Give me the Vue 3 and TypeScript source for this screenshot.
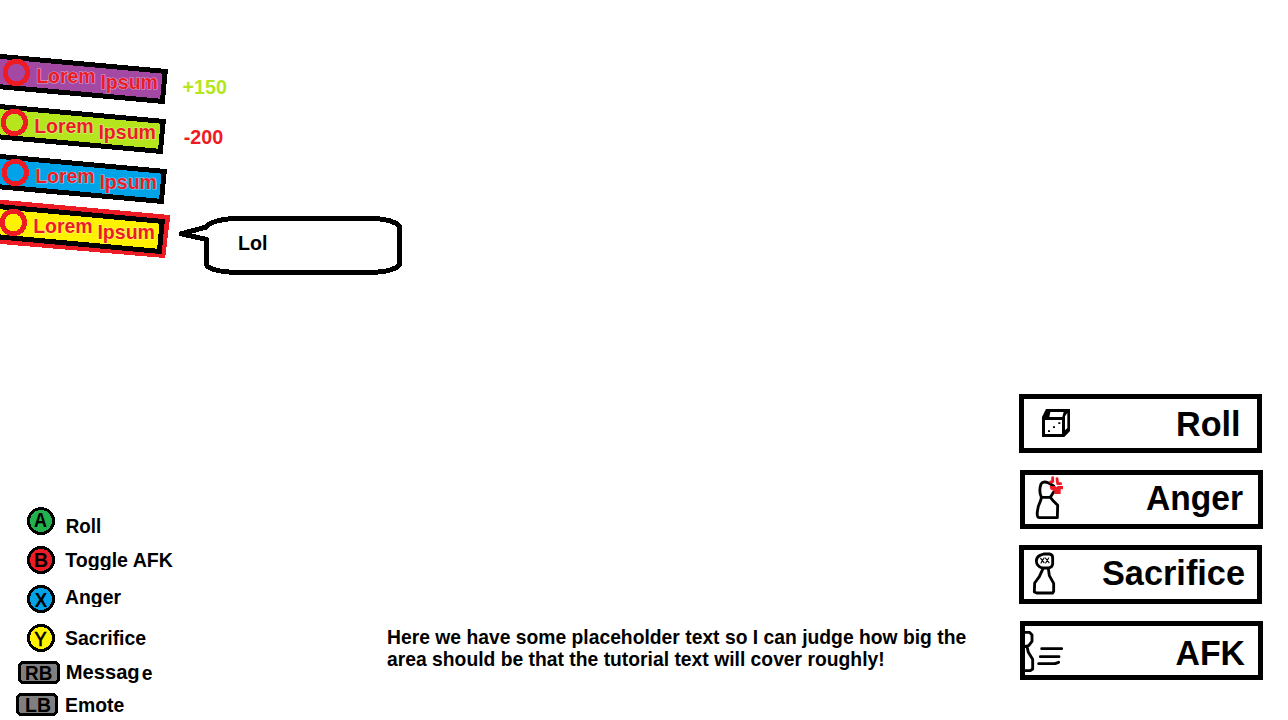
<script setup lang="ts">
interface Player {
  color: string
  shift: number
  delta?: string
  deltaX?: number
  deltaWidth?: number
  deltaColor?: string
  active?: boolean
}

interface Control {
  key: string
  color: string
  label: string
  top: number
  keyX: number
  keyY: number
  keyWidth: number
  labelX: number
  labelY: number
  labelWidth: number
  clip: number
  wide?: boolean
  padX: number
}

interface Action {
  name: string
  x: number
  y: number
  width: number
  offset: boolean
}

const players: Player[] = [
  { color: '#a349a4', shift: 0, delta: '+150', deltaX: 2.5, deltaWidth: 44.5, deltaColor: '#b5e61d' },
  { color: '#b5e61d', shift: -2, delta: '-200', deltaX: 3.7, deltaWidth: 39.5, deltaColor: '#ed1c24' },
  { color: '#00a2e8', shift: -1 },
  { color: '#fff200', shift: -3, active: true },
]

const controls: Control[] = [
  { key: 'A', color: '#22b14c', label: 'Roll', top: 507, keyX: 34, keyY: 20, keyWidth: 13, labelX: 65.7, labelY: 26, labelWidth: 35.5, clip: 39, padX: 27 },
  { key: 'B', color: '#ed1c24', label: 'Toggle AFK', top: 546, keyX: 34, keyY: 21, keyWidth: 14, labelX: 65.2, labelY: 21, labelWidth: 107.8, clip: 24, padX: 27 },
  { key: 'X', color: '#00a2e8', label: 'Anger', top: 585, keyX: 34.7, keyY: 21.5, keyWidth: 12.5, labelX: 65, labelY: 19, labelWidth: 56, clip: 22, padX: 27 },
  { key: 'Y', color: '#fff200', label: 'Sacrifice', top: 624, keyX: 34.5, keyY: 22, keyWidth: 12, labelX: 65, labelY: 21, labelWidth: 81.2, clip: 37, padX: 27 },
  { key: 'RB', color: '#7f7f7f', label: 'Messag', top: 661, keyX: 25, keyY: 19, keyWidth: 27.3, labelX: 65.7, labelY: 18, labelWidth: 74, clip: 32, wide: true, padX: 18 },
  { key: 'LB', color: '#7f7f7f', label: 'Emote', top: 693, keyX: 25, keyY: 19, keyWidth: 26, labelX: 65, labelY: 19, labelWidth: 59.2, clip: 27, wide: true, padX: 16 },
]

const actions: Action[] = [
  { name: 'Roll', x: 152, y: 37, width: 64.5, offset: false },
  { name: 'Anger', x: 121, y: 35, width: 97, offset: true },
  { name: 'Sacrifice', x: 78, y: 35, width: 143, offset: false },
  { name: 'AFK', x: 150.5, y: 39, width: 69.5, offset: true },
]

const rowHeight = (i: number): number =>
  (i + 1 < controls.length ? controls[i + 1].top : 720) - controls[i].top
</script>

<template>
  <main class="screen">
    <section class="left">
      <div class="players">
        <div v-for="(p, i) in players" :key="i" class="player">
          <svg class="tag" width="180" height="50" viewBox="0 0 180 50">
            <path v-if="p.active" class="crisp" d="M-5 7.2 L167 22.8 L162.5 59.8 L-5 45.5" fill="none" stroke="#ed1c24" stroke-width="6" />
            <g :transform="`translate(${p.shift} 0)`">
              <path class="crisp" d="M-10 10.500 L165.2 26.4 L162.4 56.4 L-10 40.8 Z" :fill="p.color" stroke="#000" stroke-width="5" />
              <circle class="crisp" cx="16.3" cy="27.5" r="11.2" fill="none" stroke="#ed1c24" stroke-width="5" />
              <text class="small red" x="36.2" y="37.5" textLength="59.5" lengthAdjust="spacingAndGlyphs">Lorem</text>
              <text class="small red" x="100.4" y="43.6" textLength="57.6" lengthAdjust="spacingAndGlyphs">Ipsum</text>
            </g>
          </svg>
          <svg v-if="p.delta" class="delta" width="60" height="56">
            <text class="small" :x="p.deltaX" y="48.5" :fill="p.deltaColor" :textLength="p.deltaWidth" lengthAdjust="spacingAndGlyphs">{{ p.delta }}</text>
          </svg>
          <svg v-if="p.active" class="bubble" width="230" height="80" viewBox="175 205 230 80">
            <path class="crisp" d="M181 233.800 L199 229 L206.500 227 Q210 220.500 233 218.500 H375 Q393 219.500 399.500 226 V265 Q393 271.500 375 272.300 H233 Q210 271 206.500 265 V239.500 Z" fill="#fff" stroke="#000" stroke-width="5" stroke-linejoin="round" />
            <text class="small" x="237.900" y="250" textLength="29.5" lengthAdjust="spacingAndGlyphs">Lol</text>
          </svg>
        </div>
      </div>
      <div class="controls">
        <svg v-for="(c, i) in controls" :key="c.key" class="control" width="200" :height="rowHeight(i)">
          <rect v-if="c.wide" class="crisp" :x="c.padX + 1.5" y="1.5" width="39" height="20" rx="4" :fill="c.color" stroke="#000" stroke-width="3" />
          <circle v-else class="crisp" cx="41" cy="14" r="12.5" :fill="c.color" stroke="#000" stroke-width="3" />
          <text :class="['small', { thin: c.key === 'Y' }]" :x="c.keyX" :y="c.keyY" :textLength="c.keyWidth" lengthAdjust="spacingAndGlyphs">{{ c.key }}</text>
          <svg x="0" y="0" width="200" :height="c.clip">
            <text class="small" :x="c.labelX" :y="c.labelY" :textLength="c.labelWidth" lengthAdjust="spacingAndGlyphs">{{ c.label }}</text>
            <text v-if="c.key === 'RB'" class="small" x="141.8" y="18.5">e</text>
          </svg>
        </svg>
      </div>
    </section>

    <p class="tutorial">
      <span>Here we have some placeholder text so I can judge how big the</span>
      <span>area should be that the tutorial text will cover roughly!</span>
    </p>

    <nav class="actions">
      <button v-for="a in actions" :key="a.name" type="button" :class="['action', { offset: a.offset }]">
        <svg width="233" height="49" viewBox="0 0 233 49">
          <g v-if="a.name === 'Roll'" transform="scale(.333333) translate(-42 -42)">
            <path d="M96 96 L108 72 H180 V138 L163 156 H96 Z" fill="#000" />
            <path d="M105 105 H156 V147 H105 Z M121 81 H161 L157 96 H118 Z M165 94 L172 84 V129 L165 136 Z" fill="#fff" />
            <path d="M114 136 h6 v5 h-6 Z M129 124 h6 v5 h-6 Z M145 112 h6 v5 h-6 Z" fill="#000" />
          </g>
          <g v-else-if="a.name === 'Anger'" class="ink" transform="scale(.333333) translate(-45 -270)">
            <path d="M94 336 C89 326 89 309 93 297 C98 289 109 291 116 294 L131 303 M131 321 L121 337 H94 C94 350 84 356 83 375 C80 388 82 398 88 398 H142 L143 361 L131 349 L121 337" />
            <path class="vein" d="M128 278 V290 L122 291 M141 281 L143 296 H152" />
            <path class="block" d="M119 303 H136 L140 307 L143 303 H159 V313 H152 V327 H133 V319 L121 313 Z" />
          </g>
          <g v-else-if="a.name === 'Sacrifice'" class="ink" transform="scale(.333333) translate(-42 -45)">
            <path d="M90 61 L101 57 H119 Q128 59 128 68 V86 Q127 98 115 99 H96 Q80 94 79 78 Q79 67 90 61 Z" />
            <path d="M99 101 L88 125 L74 144 L73 171 L80 174 H128 L131 169 V145 L118 122 L115 101" />
            <path class="fine" d="M92 70 L102 83 M102 69 L93 84 M106 69 L117 83 M116 69 L107 84" />
          </g>
          <g v-else class="ink" transform="scale(.333333) translate(-45 -273)">
            <path d="M43 292 H59 L66 300 V319 L56 332 L44 335 M51 334 L55 352 L68 373 V402 L61 407 H43" />
            <path d="M95 341 H155 M91 365 H147 M86 386 H135 L146 382" />
          </g>
          <text class="big" :x="a.x" :y="a.y" :textLength="a.width" lengthAdjust="spacingAndGlyphs">{{ a.name }}</text>
        </svg>
      </button>
    </nav>
  </main>
</template>

<style>
body {
  margin: 0;
  background: #fff;
}
</style>

<style scoped>
.screen {
  box-sizing: border-box;
  width: 1288px;
  height: 720px;
  display: grid;
  grid-template-columns: 387px 632px 269px;
  overflow: hidden;
  background: #fff;
  color: #000;
  font-family: "Liberation Sans", Arial, sans-serif;
  font-weight: 700;
}
.left {
  display: flex;
  flex-direction: column;
  justify-content: space-between;
  padding-top: 45px;
}
.player {
  display: flex;
  height: 50px;
}
svg {
  display: block;
  flex: none;
}
.tag,
.delta,
.bubble,
.control {
  overflow: visible;
}
.bubble {
  margin: 10px 0 0 -5px;
}
.crisp {
  shape-rendering: crispEdges;
}
.small {
  font-size: 19.3px;
}
.thin {
  font-weight: 400;
  stroke: #000;
  stroke-width: 0.7px;
}
.red {
  fill: #ed1c24;
  stroke: rgba(255, 255, 255, 0.5);
  stroke-width: 1.2px;
  paint-order: stroke;
}
.tutorial {
  align-self: end;
  margin: 0 0 49px;
  font-size: 19.3px;
  letter-spacing: 0.01px;
  line-height: 22px;
  white-space: nowrap;
}
.tutorial span {
  display: block;
}
.actions {
  display: flex;
  flex-direction: column;
  gap: 17px;
  padding-top: 394px;
}
.action {
  box-sizing: border-box;
  width: 243px;
  height: 59px;
  padding: 0;
  border: 5px solid #000;
  border-radius: 0;
  background: #fff;
  font: inherit;
  color: #000;
}
.action:nth-child(3) {
  margin-top: -1px;
}
.action.offset {
  margin-left: 1px;
}
.big {
  font-size: 35.8px;
}
.ink path {
  fill: none;
  stroke: #000;
  stroke-width: 8.5;
  stroke-linecap: round;
  stroke-linejoin: round;
}
.ink path.vein {
  stroke: #ed1c24;
}
.ink path.block {
  fill: #ed1c24;
  stroke: none;
}
.ink path.fine {
  stroke-width: 3.5;
}
</style>
